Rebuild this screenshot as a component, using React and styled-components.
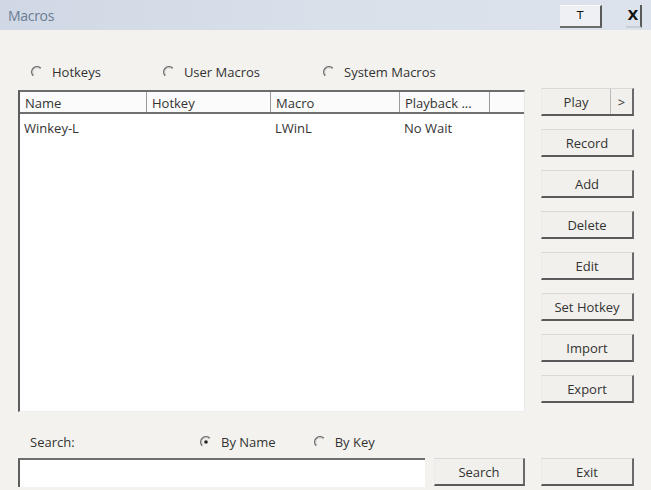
import React from "react";
import styled, { createGlobalStyle } from "styled-components";

const Global = createGlobalStyle`
  html, body { margin: 0; padding: 0; background: #f3f2ef; }
  body { font-family: "Open Sans", "Noto Sans", sans-serif; font-size: 13px; color: #333; }
  * { box-sizing: border-box; }
`;

const Win = styled.div`
  width: 651px;
  height: 490px;
  background: #f3f2ef;
  display: flex;
  flex-direction: column;
  overflow: hidden;
`;

const TitleBar = styled.div`
  height: 30px;
  flex: none;
  display: flex;
  align-items: center;
  padding: 0 9px 0 8px;
  background: linear-gradient(90deg, #cfd8e4 0%, #d8e0ea 50%, #dde3ec 100%);
`;

const Title = styled.div`
  flex: 1;
  color: #6b7c94;
  font-size: 14px;
  letter-spacing: -0.3px;
`;

const TitleBtn = styled.div`
  height: 23px;
  margin-top: 2px;
  width: ${(p) => p.$w}px;
  margin-left: ${(p) => p.$ml || 0}px;
  display: flex;
  align-items: center;
  justify-content: center;
  background: ${(p) => (p.$plain ? "transparent" : "#eef0f3")};
  border-top: ${(p) => (p.$plain ? "none" : "1px solid #f8f8f8")};
  border-bottom: 2px solid ${(p) => (p.$plain ? "#c9ced6" : "#6d6d6d")};
  border-right: 2px solid #5a5a5a;
  color: #111;
  font-size: ${(p) => p.$fs}px;
  font-weight: ${(p) => p.$fw || 400};
  font-family: "DejaVu Sans", sans-serif;
`;

const Body = styled.div`
  flex: 1;
  display: flex;
  flex-direction: column;
  padding: 32px 0 0 18px;
`;

const RadioRow = styled.div`
  height: 20px;
  display: flex;
  align-items: center;
  padding-left: ${(p) => p.$pl}px;
`;

const RadioLabel = styled.label`
  display: flex;
  align-items: center;
  gap: 9px;
  margin-right: ${(p) => p.$mr}px;
  color: #333;
  white-space: nowrap;
`;

const Circle = styled.svg`
  width: 12px;
  height: 12px;
  flex: none;
`;

function Radio({ checked, label, mr }) {
  return (
    <RadioLabel $mr={mr}>
      <Circle viewBox="0 0 12 12">
        <path d="M2.2 9.8 A5 5 0 0 1 9.8 2.2" fill="none" stroke="#6d6d6d" strokeWidth="1.3" />
        <path d="M3 9 A4 4 0 0 1 9 3" fill="none" stroke="#bdbdbd" strokeWidth="0.8" />
        {checked && <circle cx="6" cy="6" r="1.8" fill="#222" />}
      </Circle>
      {label}
    </RadioLabel>
  );
}

const MainRow = styled.div`
  display: flex;
  gap: 16px;
  margin-top: 6px;
  height: 324px;
`;

const ListBox = styled.div`
  margin-top: 2px;
  width: 507px;
  height: 322px;
  background: #fff;
  border-top: 2px solid #6c6c6c;
  border-left: 2px solid #5c5c5c;
  border-right: 1px solid #e8e8e8;
  border-bottom: 1px solid #ededed;
  display: flex;
  flex-direction: column;
`;

const Cols = "127px 124px 129px 90px 33px";

const Header = styled.div`
  display: grid;
  grid-template-columns: ${Cols};
  height: 22px;
  border-bottom: 2px solid #707070;
  background: #fbfbfb;
`;

const HeadCell = styled.div`
  padding: 2px 0 0 5px;
  line-height: 18px;
  border-right: ${(p) => (p.$last ? "none" : "1px solid #9a9a9a")};
  color: #333;
  white-space: nowrap;
  overflow: hidden;
`;

const Row = styled.div`
  display: grid;
  grid-template-columns: ${Cols};
  height: 20px;
  margin-top: 4px;
`;

const Cell = styled.div`
  padding-left: 4px;
  line-height: 20px;
  color: #333;
  white-space: nowrap;
`;

const ButtonCol = styled.div`
  width: 93px;
  display: flex;
  flex-direction: column;
  gap: 13px;
`;

const Btn = styled.div`
  height: 28px;
  flex: none;
  width: ${(p) => (p.$w ? p.$w + "px" : "93px")};
  display: flex;
  align-items: center;
  justify-content: center;
  background: #f1f0ed;
  border-top: 1px solid #d9d9d9;
  border-left: 1px solid #ebebeb;
  border-right: 2px solid #6a6a6a;
  border-bottom: 2px solid #5a5a5a;
  color: #333;
  white-space: nowrap;
`;

const Split = styled.div`
  height: 28px;
  display: flex;
  background: #f1f0ed;
  border-top: 1px solid #d9d9d9;
  border-left: 1px solid #ebebeb;
  border-right: 2px solid #6a6a6a;
  border-bottom: 2px solid #5a5a5a;
`;

const SplitPart = styled.div`
  flex: ${(p) => (p.$grow ? 1 : "none")};
  width: ${(p) => (p.$grow ? "auto" : "22px")};
  display: flex;
  align-items: center;
  justify-content: center;
  border-left: ${(p) => (p.$grow ? "none" : "1px solid #b9b9b9")};
  color: #333;
`;

const SearchRow = styled.div`
  height: 20px;
  display: flex;
  align-items: center;
  padding-left: 12px;
  margin-top: 20px;
`;

const SearchLabel = styled.div`
  width: 170px;
  color: #333;
`;

const BottomRow = styled.div`
  display: flex;
  align-items: flex-start;
  margin-top: 6px;
`;

const Input = styled.div`
  width: 407px;
  height: 29px;
  background: #fff;
  border-top: 2px solid #6e6e6e;
  border-left: 2px solid #5e5e5e;
  margin-right: 9px;
`;

const Spacer = styled.div`
  width: 16px;
`;

export default function App() {
  return (
    <Win>
      <Global />
      <TitleBar>
        <Title>Macros</Title>
        <TitleBtn $w={42} $fs={11}>T</TitleBtn>
        <TitleBtn $w={16} $ml={24} $fs={14} $fw={700} $plain>X</TitleBtn>
      </TitleBar>
      <Body>
        <RadioRow $pl={13}>
          <Radio label="Hotkeys" mr={62} />
          <Radio label="User Macros" mr={63} />
          <Radio label="System Macros" mr={0} />
        </RadioRow>
        <MainRow>
          <ListBox>
            <Header>
              <HeadCell>Name</HeadCell>
              <HeadCell>Hotkey</HeadCell>
              <HeadCell>Macro</HeadCell>
              <HeadCell>Playback ...</HeadCell>
              <HeadCell $last />
            </Header>
            <Row>
              <Cell>Winkey-L</Cell>
              <Cell />
              <Cell>LWinL</Cell>
              <Cell>No Wait</Cell>
              <Cell />
            </Row>
          </ListBox>
          <ButtonCol>
            <Split>
              <SplitPart $grow>Play</SplitPart>
              <SplitPart>&gt;</SplitPart>
            </Split>
            <Btn>Record</Btn>
            <Btn>Add</Btn>
            <Btn>Delete</Btn>
            <Btn>Edit</Btn>
            <Btn>Set Hotkey</Btn>
            <Btn>Import</Btn>
            <Btn>Export</Btn>
          </ButtonCol>
        </MainRow>
        <SearchRow>
          <SearchLabel>Search:</SearchLabel>
          <Radio checked label="By Name" mr={38} />
          <Radio label="By Key" mr={0} />
        </SearchRow>
        <BottomRow>
          <Input />
          <Btn $w={91}>Search</Btn>
          <Spacer />
          <Btn>Exit</Btn>
        </BottomRow>
      </Body>
    </Win>
  );
}
